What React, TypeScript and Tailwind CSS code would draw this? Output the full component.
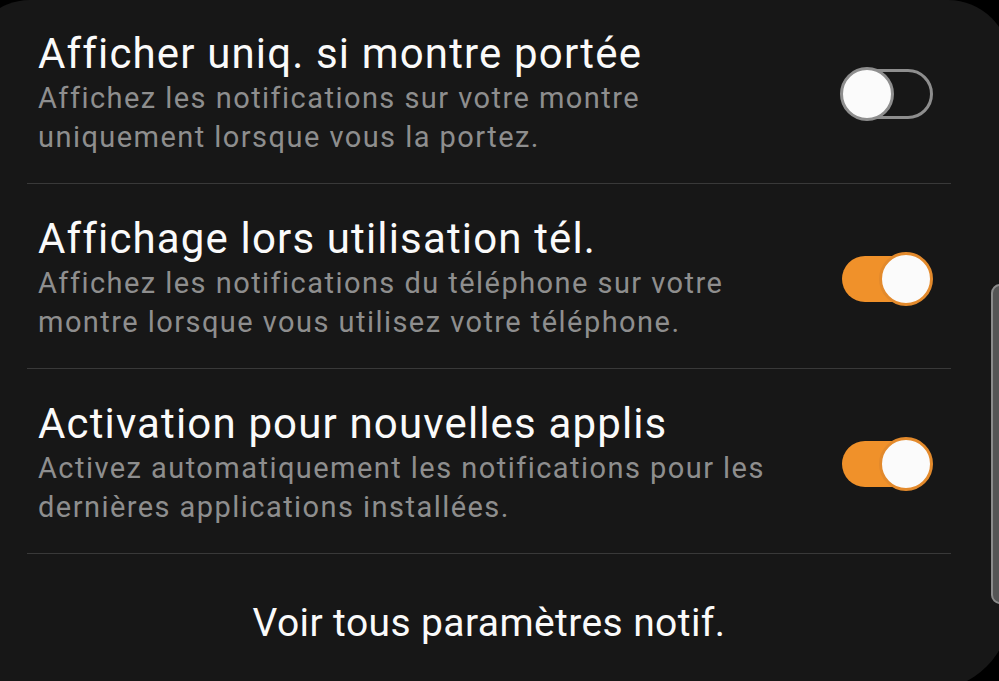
import { useState } from 'react';

interface Setting {
  title: string;
  desc: string[];
  on: boolean;
}

const initial: Setting[] = [
  {
    title: 'Afficher uniq. si montre portée',
    desc: ['Affichez les notifications sur votre montre', 'uniquement lorsque vous la portez.'],
    on: false,
  },
  {
    title: 'Affichage lors utilisation tél.',
    desc: [
      'Affichez les notifications du téléphone sur votre',
      'montre lorsque vous utilisez votre téléphone.',
    ],
    on: true,
  },
  {
    title: 'Activation pour nouvelles applis',
    desc: [
      'Activez automatiquement les notifications pour les',
      'dernières applications installées.',
    ],
    on: true,
  },
];

function Toggle({ on, onClick }: { on: boolean; onClick: () => void }) {
  return (
    <button onClick={onClick} className="relative h-[54px] w-[93px] shrink-0">
      {on ? (
        <>
          <span className="absolute left-[2px] top-[4px] h-[46px] w-[82px] rounded-full bg-[#f0912a]" />
          <span className="absolute right-0 top-0 h-[54px] w-[54px] rounded-full border-[3px] border-[#e38a2c] bg-[#fbfbfb]" />
        </>
      ) : (
        <>
          <span className="absolute left-[2px] top-[2px] h-[50px] w-[91px] rounded-full border-[3px] border-[#8e8e8e]" />
          <span className="absolute left-0 top-0 h-[54px] w-[54px] rounded-full border-[3px] border-[#8e8e8e] bg-[#fbfbfb]" />
        </>
      )}
    </button>
  );
}

export default function App() {
  const [items, setItems] = useState(initial);

  const flip = (i: number) =>
    setItems(prev => prev.map((s, j) => (j === i ? { ...s, on: !s.on } : s)));

  return (
    <div
      className="relative h-[681px] w-[999px] overflow-hidden bg-black"
      style={{ fontFamily: 'Roboto, "Noto Sans", sans-serif' }}
    >
      {/* panel, slightly wider than the window so the corners fall like the screenshot */}
      <div className="-ml-[30px] h-[690px] w-[1040px] rounded-tl-[60px] rounded-tr-[62px] rounded-br-[80px] rounded-bl-[40px] bg-[#171717] pl-[57px]">
        <div className="w-[924px]">
          {items.map((s, i) => (
            <div
              key={s.title}
              className="flex items-center border-b border-[#393939] pt-[31px] pb-[26px] pl-[11px] pr-[18px] first:pt-[30px]"
            >
              <div className="flex-1">
                <div className="text-[42px] leading-[48px] tracking-[1.15px] text-[#fafafa]">{s.title}</div>
                <div className="mt-[1px] text-[29px] leading-[39px] tracking-[1.45px] text-[#8e8e8e]">
                  {s.desc.map(l => (
                    <div key={l} className="whitespace-nowrap">{l}</div>
                  ))}
                </div>
              </div>
              <Toggle on={s.on} onClick={() => flip(i)} />
            </div>
          ))}

          <div className="pt-[45px] text-center text-[39px] leading-[48px] tracking-[0.4px] text-[#fafafa]">
            Voir tous paramètres notif.
          </div>
        </div>
      </div>

      {/* edge scroll indicator */}
      <div className="absolute left-[991px] top-[284px] h-[320px] w-[20px] rounded-[9px] border-2 border-[#8c8c8c] bg-[#555555]" />
    </div>
  );
}
